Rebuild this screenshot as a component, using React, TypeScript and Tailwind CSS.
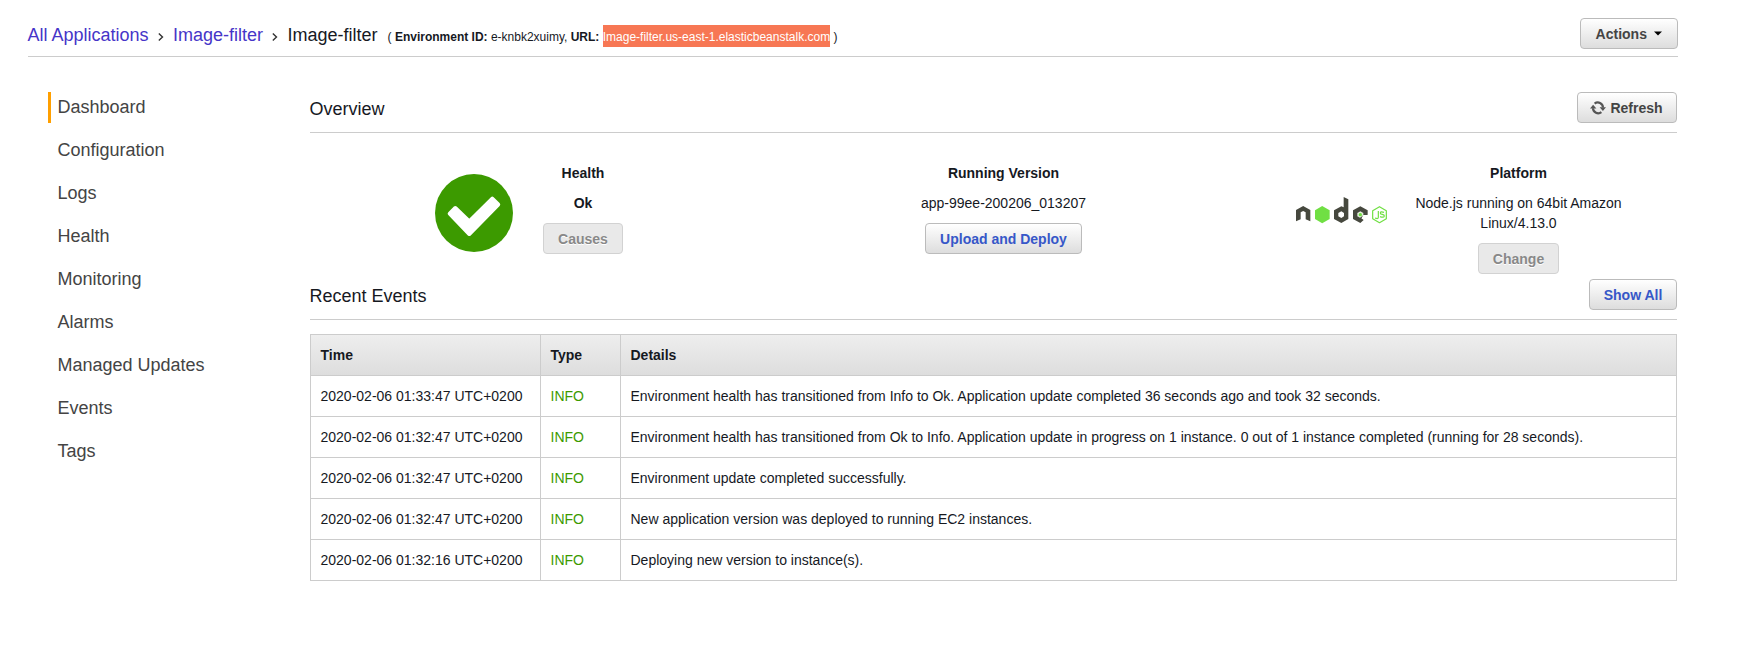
import type { ReactNode } from "react";

const navItems = ["Dashboard", "Configuration", "Logs", "Health", "Monitoring", "Alarms", "Managed Updates", "Events", "Tags"];

const events = [
  ["2020-02-06 01:33:47 UTC+0200", "Environment health has transitioned from Info to Ok. Application update completed 36 seconds ago and took 32 seconds."],
  ["2020-02-06 01:32:47 UTC+0200", "Environment health has transitioned from Ok to Info. Application update in progress on 1 instance. 0 out of 1 instance completed (running for 28 seconds)."],
  ["2020-02-06 01:32:47 UTC+0200", "Environment update completed successfully."],
  ["2020-02-06 01:32:47 UTC+0200", "New application version was deployed to running EC2 instances."],
  ["2020-02-06 01:32:16 UTC+0200", "Deploying new version to instance(s)."],
];

const tones = {
  dark: "border-[#bbb] bg-linear-to-b from-white to-[#ddd] text-[#444]",
  link: "border-[#bbb] bg-linear-to-b from-white to-[#ddd] text-[#3657c8]",
  disabled: "border-[#d2d2d2] bg-[#e9e9e9] text-[#888] [text-shadow:0_1px_0_#fff]",
};

function Button({ tone, className, children }: { tone: keyof typeof tones; className: string; children: ReactNode }) {
  return (
    <button
      disabled={tone === "disabled"}
      className={`flex h-[31px] shrink-0 items-center justify-center rounded-[4px] border text-sm leading-5 font-bold whitespace-nowrap ${tones[tone]} ${className}`}
    >
      {children}
    </button>
  );
}

function Chevron({ className }: { className: string }) {
  return (
    <svg className={`mb-px shrink-0 ${className}`} width="6" height="8" viewBox="0 0 6 8" fill="none" stroke="#333" strokeWidth="1.4">
      <path d="M0.8 0.5 L4.5 4 L0.8 7.5" />
    </svg>
  );
}

function RefreshIcon() {
  return (
    <svg width="16" height="14" viewBox="0 0 16 14" className="mr-1">
      <g fill="none" stroke="#555" strokeWidth="2.2">
        <path d="M4.6 2.6 A5.2 5.2 0 0 1 13 6.6" />
        <path d="M11.4 11.2 A5.2 5.2 0 0 1 3 7.200" />
      </g>
      <path d="M9.6 6.2 H16 L12.9 9.9 Z M0 7.4 H6.4 L3.1 3.7 Z" fill="#555" />
    </svg>
  );
}

function CheckIcon() {
  return (
    <svg width="78" height="78" viewBox="0 0 78 78">
      <circle cx="39" cy="39" r="39" fill="#3c9a00" />
      <path
        d="M14.7 39.7 L20.3 34 L34.3 47.4 L57.3 24.7 L63.2 30.5 L34.3 60 Z"
        fill="#fff"
        stroke="#fff"
        strokeWidth="4"
        strokeLinejoin="round"
      />
    </svg>
  );
}

function NodeLogo() {
  return (
    <svg width="91" height="27" viewBox="0 0 273 81">
      <g fill="#46483e">
        <path d="M0 39 L21.5 27 L43 39 V73 L29 67 V46 L21.5 42 L14 46 V67 L0 73 Z" />
        <path fillRule="evenodd" d="M143 0 L157 7 V66 L136 78 L114 66 V40 L136 28 L143 31 Z M136 43 L127 48 V58 L136 63 L144 58 V48 Z" />
        <path d="M171 40 L193 28 L215 40 V53 L196 64 L203 69 L193 78 L171 66 Z" />
      </g>
      <path d="M193 43 L202 48 V55 L192 62 L184 58 V48 Z" fill="#e4efdc" />
      <path d="M202 54 L217 54 L217 68 L205 68 L197 63 Z" fill="#fff" />
      <path d="M78.500 27 L101 40 V66 L78.500 79 L57 66 V40 Z" fill="#70df43" />
      <circle cx="193" cy="53" r="5" fill="#70df43" />
      <g fill="none" stroke="#70df43" strokeWidth="3.600">
        <path d="M250.500 29 L271 41 V65 L250.500 77 L230 65 V41 Z" strokeLinejoin="round" />
        <path d="M247 42 V61 Q247 67 237 63 M264 46 Q253 42 253 48 Q253 52 259 52 Q265 53 265 57 Q264 63 252 59" />
      </g>
    </svg>
  );
}

function SectionHeader({ title, children }: { title: string; children: ReactNode }) {
  return (
    <div className="flex h-[41px] items-start justify-between border-b border-[#ccc]">
      <h2 className="-ml-[0.5px] pt-[6px] text-lg leading-[22px]">{title}</h2>
      {children}
    </div>
  );
}

export default function App() {
  return (
    <div className="h-[657px] w-[1754px] overflow-hidden bg-white font-['Liberation_Sans',Arial,sans-serif] text-sm text-[#16191f]">
      <header className="mr-[76px] ml-7 flex h-[57px] items-start justify-between border-b border-[#ccc]">
        <div className="-ml-[0.5px] flex items-baseline pt-6 text-lg leading-[22px] whitespace-nowrap">
          <a className="w-[121px] text-[#4635c8]">All Applications</a>
          <Chevron className="mr-[9px] ml-[9.5px]" />
          <a className="w-[90px] text-[#4635c8]">Image-filter</a>
          <Chevron className="mr-[9.5px] ml-[9px]" />
          <span>Image-filter</span>
          <span className="ml-[10px] text-xs leading-[22px]">
            ( <b>Environment ID:</b> e-knbk2xuimy, <b>URL:</b>{" "}
            <span className="bg-[#f77754] pt-[5px] pb-[3px] text-white">Image-filter.us-east-1.elasticbeanstalk.com</span> )
          </span>
        </div>
        <Button tone="dark" className="mt-[18px] w-[98px]">
          Actions
          <svg width="8" height="5" viewBox="0 0 8 5" className="ml-[7.5px]">
            <path d="M0 0.500 H8 L4 4.500 Z" fill="#000" />
          </svg>
        </Button>
      </header>

      <div className="flex pt-[35px]">
        <nav className="ml-12 flex w-[262px] shrink-0 flex-col gap-3">
          {navItems.map((item, i) => (
            <a
              key={item}
              className={`flex h-[31px] items-center border-l-[3px] pb-[2px] pl-[6.5px] text-lg leading-[22px] text-[#444] ${i === 0 ? "border-[#ff9f00]" : "border-transparent"}`}
            >
              {item}
            </a>
          ))}
        </nav>

        <main className="w-[1367px]">
          <SectionHeader title="Overview">
            <Button tone="dark" className="w-[100px] pr-px">
              <RefreshIcon />
              Refresh
            </Button>
          </SectionHeader>

          <section className="grid h-[146px] grid-cols-[78px_140px_58px_585px_91px_263px] items-start pt-[30px] pl-[125px] text-center leading-5">
            <div className="pt-[11px]">
              <CheckIcon />
            </div>
            <div className="flex flex-col items-center gap-[10px]">
              <b>Health</b>
              <b>Ok</b>
              <Button tone="disabled" className="w-20">Causes</Button>
            </div>
            <div />
            <div className="flex flex-col items-center gap-[10px]">
              <b>Running Version</b>
              <span>app-99ee-200206_013207</span>
              <Button tone="link" className="w-[157px]">Upload and Deploy</Button>
            </div>
            <div className="pt-[34px]">
              <NodeLogo />
            </div>
            <div className="flex flex-col items-center gap-[10px]">
              <b>Platform</b>
              <span className="w-[220px]">Node.js running on 64bit Amazon Linux/4.13.0</span>
              <Button tone="disabled" className="w-[81px]">Change</Button>
            </div>
          </section>

          <SectionHeader title="Recent Events">
            <Button tone="link" className="w-[88px]">Show All</Button>
          </SectionHeader>

          <table className="mt-[14px] w-full table-fixed border-collapse text-left leading-5">
            <colgroup>
              <col className="w-[230px]" />
              <col className="w-[80px]" />
              <col />
            </colgroup>
            <thead>
              <tr className="h-[41px] bg-linear-to-b from-[#eee] to-[#ddd]">
                {["Time", "Type", "Details"].map((h) => (
                  <th key={h} className="border border-[#ccc] px-[9.5px] py-0 font-bold">{h}</th>
                ))}
              </tr>
            </thead>
            <tbody>
              {events.map(([time, details], i) => (
                <tr key={i} className="h-[41px]">
                  <td className="border border-[#ccc] px-[9.5px] py-0 whitespace-nowrap">{time}</td>
                  <td className="border border-[#ccc] px-[9.5px] py-0 text-[#3c9a00]">INFO</td>
                  <td className="border border-[#ccc] px-[9.5px] py-0 whitespace-nowrap">{details}</td>
                </tr>
              ))}
            </tbody>
          </table>
        </main>
      </div>
    </div>
  );
}
